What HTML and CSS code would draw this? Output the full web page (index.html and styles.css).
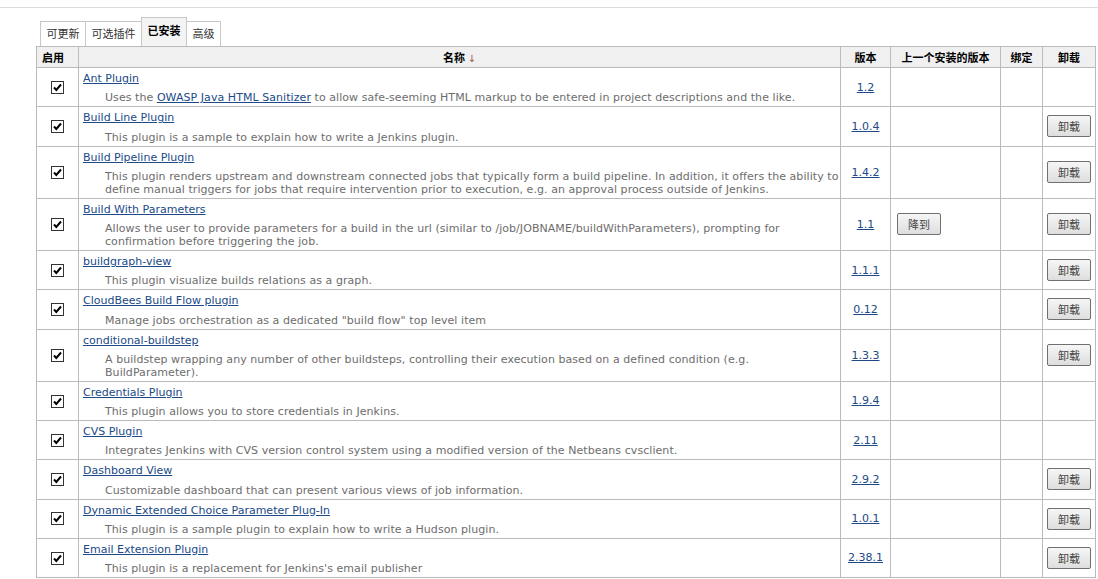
FILE: index.html
```html
<!DOCTYPE html>
<html>
<head>
<meta charset="utf-8">
<link rel="stylesheet" href="styles.css">
</head>
<body>
<div class="topline"></div>
<div class="page">
  <div class="tabs">
    <div class="tab">可更新</div>
    <div class="tab">可选插件</div>
    <div class="tab active">已安装</div>
    <div class="tab">高级</div>
  </div>
  <table class="plugins">
    <colgroup>
      <col class="c-en"><col class="c-name"><col class="c-ver"><col class="c-prev"><col class="c-pin"><col class="c-un">
    </colgroup>
    <thead>
      <tr>
        <th class="h-left">启用</th>
        <th>名称 <span class="arrow">↓</span></th>
        <th>版本</th>
        <th>上一个安装的版本</th>
        <th>绑定</th>
        <th>卸载</th>
      </tr>
    </thead>
    <tbody>
      <tr>
        <td class="en"><span class="cb"><svg viewBox="0 0 11 11"><path d="M2 5.5 L4.3 8 L9 2.5" /></svg></span></td>
        <td class="name"><a href="#">Ant Plugin</a><div class="desc">Uses the <a href="#">OWASP Java HTML Sanitizer</a> to allow safe-seeming HTML markup to be entered in project descriptions and the like.</div></td>
        <td class="ver"><a href="#">1.2</a></td>
        <td></td><td></td><td></td>
      </tr>
      <tr>
        <td class="en"><span class="cb"><svg viewBox="0 0 11 11"><path d="M2 5.5 L4.3 8 L9 2.5" /></svg></span></td>
        <td class="name"><a href="#">Build Line Plugin</a><div class="desc">This plugin is a sample to explain how to write a Jenkins plugin.</div></td>
        <td class="ver"><a href="#">1.0.4</a></td>
        <td></td><td></td><td class="un"><button class="btn">卸载</button></td>
      </tr>
      <tr>
        <td class="en"><span class="cb"><svg viewBox="0 0 11 11"><path d="M2 5.5 L4.3 8 L9 2.5" /></svg></span></td>
        <td class="name"><a href="#">Build Pipeline Plugin</a><div class="desc">This plugin renders upstream and downstream connected jobs that typically form a build pipeline. In addition, it offers the ability to define manual triggers for jobs that require intervention prior to execution, e.g. an approval process outside of Jenkins.</div></td>
        <td class="ver"><a href="#">1.4.2</a></td>
        <td></td><td></td><td class="un"><button class="btn">卸载</button></td>
      </tr>
      <tr>
        <td class="en"><span class="cb"><svg viewBox="0 0 11 11"><path d="M2 5.5 L4.3 8 L9 2.5" /></svg></span></td>
        <td class="name"><a href="#">Build With Parameters</a><div class="desc">Allows the user to provide parameters for a build in the url (similar to /job/JOBNAME/buildWithParameters), prompting for confirmation before triggering the job.</div></td>
        <td class="ver"><a href="#">1.1</a></td>
        <td class="prev"><button class="btn">降到</button></td><td></td><td class="un"><button class="btn">卸载</button></td>
      </tr>
      <tr>
        <td class="en"><span class="cb"><svg viewBox="0 0 11 11"><path d="M2 5.5 L4.3 8 L9 2.5" /></svg></span></td>
        <td class="name"><a href="#">buildgraph-view</a><div class="desc">This plugin visualize builds relations as a graph.</div></td>
        <td class="ver"><a href="#">1.1.1</a></td>
        <td></td><td></td><td class="un"><button class="btn">卸载</button></td>
      </tr>
      <tr>
        <td class="en"><span class="cb"><svg viewBox="0 0 11 11"><path d="M2 5.5 L4.3 8 L9 2.5" /></svg></span></td>
        <td class="name"><a href="#">CloudBees Build Flow plugin</a><div class="desc">Manage jobs orchestration as a dedicated "build flow" top level item</div></td>
        <td class="ver"><a href="#">0.12</a></td>
        <td></td><td></td><td class="un"><button class="btn">卸载</button></td>
      </tr>
      <tr>
        <td class="en"><span class="cb"><svg viewBox="0 0 11 11"><path d="M2 5.5 L4.3 8 L9 2.5" /></svg></span></td>
        <td class="name"><a href="#">conditional-buildstep</a><div class="desc">A buildstep wrapping any number of other buildsteps, controlling their execution based on a defined condition (e.g. BuildParameter).</div></td>
        <td class="ver"><a href="#">1.3.3</a></td>
        <td></td><td></td><td class="un"><button class="btn">卸载</button></td>
      </tr>
      <tr>
        <td class="en"><span class="cb"><svg viewBox="0 0 11 11"><path d="M2 5.5 L4.3 8 L9 2.5" /></svg></span></td>
        <td class="name"><a href="#">Credentials Plugin</a><div class="desc">This plugin allows you to store credentials in Jenkins.</div></td>
        <td class="ver"><a href="#">1.9.4</a></td>
        <td></td><td></td><td></td>
      </tr>
      <tr>
        <td class="en"><span class="cb"><svg viewBox="0 0 11 11"><path d="M2 5.5 L4.3 8 L9 2.5" /></svg></span></td>
        <td class="name"><a href="#">CVS Plugin</a><div class="desc">Integrates Jenkins with CVS version control system using a modified version of the Netbeans cvsclient.</div></td>
        <td class="ver"><a href="#">2.11</a></td>
        <td></td><td></td><td></td>
      </tr>
      <tr>
        <td class="en"><span class="cb"><svg viewBox="0 0 11 11"><path d="M2 5.5 L4.3 8 L9 2.5" /></svg></span></td>
        <td class="name"><a href="#">Dashboard View</a><div class="desc">Customizable dashboard that can present various views of job information.</div></td>
        <td class="ver"><a href="#">2.9.2</a></td>
        <td></td><td></td><td class="un"><button class="btn">卸载</button></td>
      </tr>
      <tr>
        <td class="en"><span class="cb"><svg viewBox="0 0 11 11"><path d="M2 5.5 L4.3 8 L9 2.5" /></svg></span></td>
        <td class="name"><a href="#">Dynamic Extended Choice Parameter Plug-In</a><div class="desc">This plugin is a sample plugin to explain how to write a Hudson plugin.</div></td>
        <td class="ver"><a href="#">1.0.1</a></td>
        <td></td><td></td><td class="un"><button class="btn">卸载</button></td>
      </tr>
      <tr>
        <td class="en"><span class="cb"><svg viewBox="0 0 11 11"><path d="M2 5.5 L4.3 8 L9 2.5" /></svg></span></td>
        <td class="name"><a href="#">Email Extension Plugin</a><div class="desc">This plugin is a replacement for Jenkins's email publisher</div></td>
        <td class="ver"><a href="#">2.38.1</a></td>
        <td></td><td></td><td class="un"><button class="btn">卸载</button></td>
      </tr>
    </tbody>
  </table>
</div>
</body>
</html>
```

FILE: styles.css
```css
html, body {
  margin: 0;
  padding: 0;
  background: #fff;
}
body {
  font-family: "DejaVu Sans", Verdana, "Noto Sans CJK SC", sans-serif;
  font-size: 11px;
  color: #333;
}
.topline {
  height: 7px;
  border-bottom: 1px solid #dcdcdc;
}
.page {
  padding: 9px 0 0 36px;
}
.tabs {
  display: flex;
  align-items: flex-end;
  margin-left: 4px;
  height: 29px;
}
.tab {
  font-family: "Noto Sans CJK SC", sans-serif;
  font-size: 11px;
  color: #333;
  height: 24px;
  line-height: 23px;
  padding: 0 5.5px;
  border: 1px solid #c8c8c8;
  border-bottom: none;
  border-right: none;
  background: #fff;
}
.tab:last-child {
  border-right: 1px solid #c8c8c8;
}
.tab.active {
  height: 28px;
  line-height: 25px;
  font-weight: bold;
  color: #000;
  border-right: 1px solid #c8c8c8;
  background: #f4f4f4;
}
.tab.active + .tab {
  border-left: none;
}
.plugins {
  border-collapse: collapse;
  table-layout: fixed;
  width: 1059px;
  border: 1px solid #bbb;
}
.c-en { width: 42px; }
.c-name { width: 762px; }
.c-ver { width: 50px; }
.c-prev { width: 110px; }
.c-pin { width: 42px; }
.c-un { width: 53px; }
th {
  background: #f0f0f0;
  border: 1px solid #bbb;
  height: 20px;
  padding: 0 4px;
  font-family: "Noto Sans CJK SC", sans-serif;
  font-size: 11px;
  font-weight: bold;
  color: #000;
  text-align: center;
}
th.h-left {
  text-align: left;
  padding-left: 5px;
}
.arrow {
  font-family: "DejaVu Sans", sans-serif;
  font-weight: normal;
  color: #a05050;
  font-size: 10px;
}
td {
  border: 1px solid #bbb;
  padding: 0;
  vertical-align: middle;
}
td.en {
  text-align: center;
}
.cb {
  display: inline-block;
  width: 11px;
  height: 11px;
  border: 1px solid #333;
  background: #fff;
  vertical-align: middle;
}
.cb svg {
  display: block;
  width: 11px;
  height: 11px;
  fill: none;
  stroke: #000;
  stroke-width: 2;
}
td.name {
  padding: 3px 1px 2px 4px;
  line-height: 16.25px;
}
a {
  color: #204a87;
  text-decoration: underline;
}
.desc {
  margin-top: 4px;
  padding-left: 22px;
  line-height: 13px;
  letter-spacing: 0.06px;
  color: #6d6d6d;
}
td.ver {
  text-align: center;
}
td.prev {
  padding-left: 6px;
}
td.un {
  text-align: center;
}
.btn {
  font-family: "Noto Sans CJK SC", sans-serif;
  font-size: 11px;
  color: #444;
  width: 44px;
  height: 22px;
  padding: 0;
  border: 1px solid #707070;
  border-radius: 2px;
  background: linear-gradient(#f6f6f6, #dedede);
  vertical-align: middle;
}
```
